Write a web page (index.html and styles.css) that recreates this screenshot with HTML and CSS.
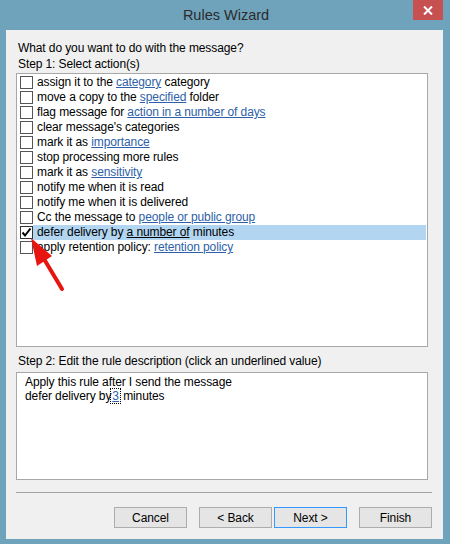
FILE: index.html
```html
<!DOCTYPE html>
<html>
<head>
<meta charset="utf-8">
<link rel="stylesheet" href="styles.css">
</head>
<body>
<div class="window">
  <div class="titlebar">
    <span class="title">Rules Wizard</span>
    <div class="close">
      <svg width="10" height="9" viewBox="0 0 10 9"><path d="M1 0.5 L9 8.5 M9 0.5 L1 8.5" stroke="#fff" stroke-width="2" fill="none"/></svg>
    </div>
  </div>
  <div class="client">
    <div class="label">What do you want to do with the message?</div>
    <div class="label">Step 1: Select action(s)</div>
    <div class="listbox">
      <div class="row"><span class="cb"></span><span class="txt">assign it to the <a>category</a> category</span></div>
      <div class="row"><span class="cb"></span><span class="txt">move a copy to the <a>specified</a> folder</span></div>
      <div class="row"><span class="cb"></span><span class="txt">flag message for <a>action in a number of days</a></span></div>
      <div class="row"><span class="cb"></span><span class="txt">clear message's categories</span></div>
      <div class="row"><span class="cb"></span><span class="txt">mark it as <a>importance</a></span></div>
      <div class="row"><span class="cb"></span><span class="txt">stop processing more rules</span></div>
      <div class="row"><span class="cb"></span><span class="txt">mark it as <a>sensitivity</a></span></div>
      <div class="row"><span class="cb"></span><span class="txt">notify me when it is read</span></div>
      <div class="row"><span class="cb"></span><span class="txt">notify me when it is delivered</span></div>
      <div class="row"><span class="cb"></span><span class="txt">Cc the message to <a>people or public group</a></span></div>
      <div class="row selected"><span class="cb checked"><svg width="11" height="11" viewBox="0 0 11 11"><path d="M1.5 5.5 L4 8.5 L9.5 1.5" stroke="#000" stroke-width="2" fill="none"/></svg></span><span class="txt">defer delivery by <a class="dark">a number of</a> minutes</span></div>
      <div class="row"><span class="cb"></span><span class="txt">apply retention policy: <a>retention policy</a></span></div>
    </div>
    <div class="label step2">Step 2: Edit the rule description (click an underlined value)</div>
    <div class="desc">
      <div>Apply this rule after I send the message</div>
      <div>defer delivery by<span class="focus"><a>3</a></span> minutes</div>
    </div>
    <div class="sep"></div>
    <div class="buttons">
      <div class="btn">Cancel</div>
      <div class="btn gap">&lt; Back</div>
      <div class="btn default">Next &gt;</div>
      <div class="btn gap">Finish</div>
    </div>
  </div>
  <svg class="arrow" width="80" height="70" viewBox="0 0 80 70">
    <line x1="44" y1="29" x2="62" y2="59" stroke="#e8140f" stroke-width="4" stroke-linecap="round"/>
    <polygon points="31,8 37,36 52,26" fill="#e8140f"/>
  </svg>
</div>
</body>
</html>
```

FILE: styles.css
```css
html, body {
  margin: 0;
  padding: 0;
}
body {
  background: #6fa3bc;
  width: 450px;
  height: 544px;
  overflow: hidden;
  font-family: "Liberation Sans", Arial, sans-serif;
  font-size: 12px;
  letter-spacing: -0.1px;
  color: #000;
}
.window {
  position: relative;
  width: 450px;
  height: 544px;
}
.titlebar {
  height: 30px;
  display: flex;
  justify-content: center;
  align-items: center;
}
.title {
  font-size: 14.5px;
  letter-spacing: 0;
  color: #2b2b2b;
  padding-left: 2px;
}
.close {
  position: absolute;
  top: 0;
  left: 413px;
  width: 30px;
  height: 20px;
  background: #c75050;
  display: flex;
  align-items: center;
  justify-content: center;
}
.client {
  margin-left: 6px;
  width: 437px;
  height: 509px;
  background: #f0f0f0;
  box-sizing: border-box;
  padding: 10px 0 0 10px;
}
.label {
  line-height: 16px;
  height: 16px;
  padding-left: 2px;
}
.listbox {
  margin-top: 1px;
  width: 412px;
  height: 274px;
  box-sizing: border-box;
  border: 1px solid #a8a8a8;
  background: #fff;
  padding-top: 1px;
}
.row {
  height: 15px;
  display: flex;
  align-items: center;
  line-height: 15px;
}
.cb {
  width: 11px;
  height: 11px;
  border: 1px solid #555;
  background: #fff;
  margin-left: 3px;
  flex: none;
  display: flex;
  align-items: center;
  justify-content: center;
}
.cb.checked {
  border-color: #333;
}
.txt {
  padding-left: 4px;
  flex: 1;
  white-space: nowrap;
}
.row.selected .txt {
  background: #b2d6f2;
  margin-right: 1px;
}
a {
  color: #2e5fa8;
  text-decoration: underline;
}
a.dark {
  color: #000;
}
.step2 {
  margin-top: 6px;
}
.desc {
  margin-top: 3px;
  width: 412px;
  height: 108px;
  box-sizing: border-box;
  border: 1px solid #a8a8a8;
  background: #fff;
  padding: 2px 0 0 8px;
  line-height: 14px;
}
.focus {
  outline: 1px dotted #000;
  outline-offset: 0px;
  padding: 0 1px;
}
.sep {
  margin-top: 12px;
  width: 416px;
  height: 1px;
  background: #a0a0a0;
}
.buttons {
  margin-top: 14px;
  display: flex;
  justify-content: flex-end;
  width: 416px;
}
.btn {
  width: 73px;
  height: 21px;
  box-sizing: border-box;
  border: 1px solid #adadad;
  background: #e5e5e5;
  display: flex;
  align-items: center;
  justify-content: center;
}
.btn.gap {
  margin-left: 12px;
}
.btn.default {
  margin-left: 2px;
  border-color: #3399ff;
}
.arrow {
  position: absolute;
  left: 0;
  top: 230px;
}
```
